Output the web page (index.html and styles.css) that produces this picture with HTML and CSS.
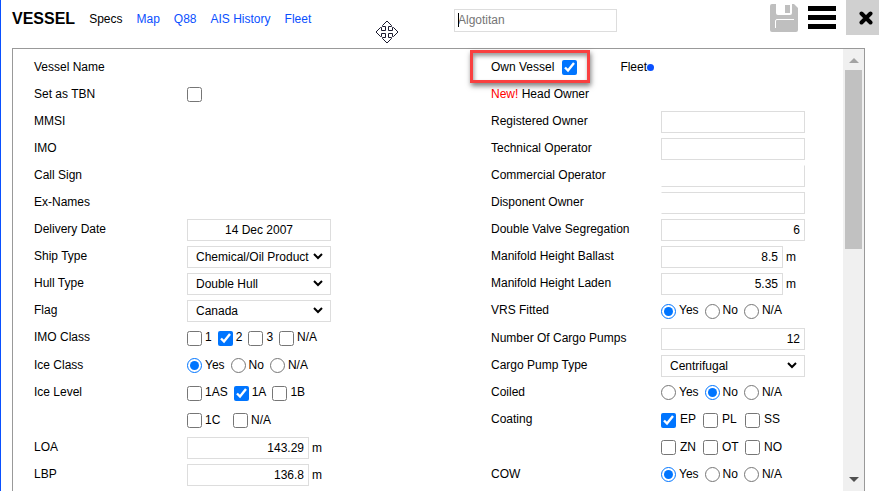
FILE: index.html
```html
<!DOCTYPE html>
<html lang="en">
<head>
    <meta charset="UTF-8">
    <meta name="viewport" content="width=device-width, initial-scale=1.0">
    <title>Vessel</title>
    <link rel="stylesheet" href="styles.css">
</head>
<body>
    <div class="window">
        <header class="header">
            <nav class="tabs">
                <h1>VESSEL</h1>
                <a href="#specs" class="active">Specs</a>
                <a href="#map">Map</a>
                <a href="#q88">Q88</a>
                <a href="#ais">AIS History</a>
                <a href="#fleet">Fleet</a>
            </nav>
            <div class="search">
                <input type="text" placeholder="Algotitan" aria-label="Vessel">
            </div>
            <div class="tools">
                <button type="button" class="save" aria-label="Save">
                    <svg width="28" height="28" viewBox="0 0 28 28">
                        <path fill="#bfbfbf" d="M2 0H6V9Q6 11 8 11H20Q22 11 22 9V0H24L28 4V26Q28 28 26 28H2Q0 28 0 26V2Q0 0 2 0Z"/>
                        <rect x="15" y="1" width="5" height="8" fill="#bfbfbf"/>
                        <path fill="none" stroke="#fff" d="M5.5 24V17Q5.5 15.5 7 15.5H24"/>
                    </svg>
                </button>
                <button type="button" class="menu" aria-label="Menu">
                    <svg width="28" height="23" viewBox="0 0 28 23">
                        <path stroke="#000" stroke-width="5" d="M0 2.5H28M0 11.5H28M0 20.5H28"/>
                    </svg>
                </button>
                <button type="button" class="close" aria-label="Close">
                    <svg width="14" height="14" viewBox="0 0 14 14">
                        <path stroke="#000" stroke-width="4" stroke-linecap="round" d="M2.5 2.5L11.5 11.5M11.5 2.5L2.5 11.5"/>
                    </svg>
                </button>
            </div>
            <svg class="move" width="24" height="24" viewBox="0 0 24 24">
                <path fill="#fff" stroke="#1a1a2e" d="M12 1L16.5 5.5V6.5H13.5V10.5H17.5V7.5H18.5L23 12L18.5 16.5H17.5V13.5H13.5V17.5H16.5V18.5L12 23L7.5 18.5V17.5H10.5V13.5H6.5V16.5H5.5L1 12L5.5 7.5H6.5V10.5H10.5V6.5H7.5V5.5Z"/>
            </svg>
        </header>

        <main class="panel">
            <form class="form">
                <div class="column left">
                    <div class="row"><span class="name">Vessel Name</span></div>
                    <div class="row">
                        <label class="name" for="tbn">Set as TBN</label>
                        <div class="choices"><input type="checkbox" id="tbn"></div>
                    </div>
                    <div class="row"><span class="name">MMSI</span></div>
                    <div class="row"><span class="name">IMO</span></div>
                    <div class="row"><span class="name">Call Sign</span></div>
                    <div class="row"><span class="name">Ex-Names</span></div>
                    <div class="row">
                        <label class="name" for="delivery">Delivery Date</label>
                        <input type="text" class="box date" id="delivery" value="14 Dec 2007">
                    </div>
                    <div class="row">
                        <label class="name" for="shipType">Ship Type</label>
                        <select class="box" id="shipType"><option>Chemical/Oil Product</option></select>
                    </div>
                    <div class="row">
                        <label class="name" for="hullType">Hull Type</label>
                        <select class="box" id="hullType"><option>Double Hull</option></select>
                    </div>
                    <div class="row">
                        <label class="name" for="flag">Flag</label>
                        <select class="box" id="flag"><option>Canada</option></select>
                    </div>
                    <div class="row tall">
                        <span class="name">IMO Class</span>
                        <div class="choices">
                            <label><input type="checkbox"><span>1</span></label>
                            <label><input type="checkbox" checked><span>2</span></label>
                            <label><input type="checkbox"><span>3</span></label>
                            <label><input type="checkbox"><span>N/A</span></label>
                        </div>
                    </div>
                    <div class="row">
                        <span class="name">Ice Class</span>
                        <div class="choices">
                            <label><input type="radio" name="iceClass" checked><span>Yes</span></label>
                            <label><input type="radio" name="iceClass"><span>No</span></label>
                            <label><input type="radio" name="iceClass"><span>N/A</span></label>
                        </div>
                    </div>
                    <div class="row tall">
                        <span class="name">Ice Level</span>
                        <div class="choices ice">
                            <label><input type="checkbox"><span>1AS</span></label>
                            <label><input type="checkbox" checked><span>1A</span></label>
                            <label><input type="checkbox"><span>1B</span></label>
                        </div>
                    </div>
                    <div class="row">
                        <span class="name"></span>
                        <div class="choices ice">
                            <label><input type="checkbox"><span>1C</span></label>
                            <label><input type="checkbox"><span>N/A</span></label>
                        </div>
                    </div>
                    <div class="row">
                        <label class="name" for="loa">LOA</label>
                        <input type="text" class="box number short" id="loa" value="143.29"><span class="unit">m</span>
                    </div>
                    <div class="row">
                        <label class="name" for="lbp">LBP</label>
                        <input type="text" class="box number short" id="lbp" value="136.8"><span class="unit">m</span>
                    </div>
                </div>

                <div class="column right">
                    <div class="row own">
                        <div class="highlight"></div>
                        <label class="own-label" for="own">Own Vessel</label>
                        <input type="checkbox" id="own" checked>
                        <span class="fleet">Fleet</span><i class="dot"></i>
                    </div>
                    <div class="row"><span class="name"><b class="new">New!</b> Head Owner</span></div>
                    <div class="row">
                        <label class="name" for="registered">Registered Owner</label>
                        <input type="text" class="box" id="registered">
                    </div>
                    <div class="row">
                        <label class="name" for="technical">Technical Operator</label>
                        <input type="text" class="box" id="technical">
                    </div>
                    <div class="row">
                        <label class="name" for="commercial">Commercial Operator</label>
                        <input type="text" class="box open-top open-left" id="commercial">
                    </div>
                    <div class="row">
                        <label class="name" for="disponent">Disponent Owner</label>
                        <input type="text" class="box open-left" id="disponent">
                    </div>
                    <div class="row">
                        <label class="name" for="valve">Double Valve Segregation</label>
                        <input type="text" class="box number" id="valve" value="6">
                    </div>
                    <div class="row">
                        <label class="name" for="ballast">Manifold Height Ballast</label>
                        <input type="text" class="box number short" id="ballast" value="8.5"><span class="unit">m</span>
                    </div>
                    <div class="row">
                        <label class="name" for="laden">Manifold Height Laden</label>
                        <input type="text" class="box number short" id="laden" value="5.35"><span class="unit">m</span>
                    </div>
                    <div class="row tall">
                        <span class="name">VRS Fitted</span>
                        <div class="choices">
                            <label><input type="radio" name="vrs" checked><span>Yes</span></label>
                            <label><input type="radio" name="vrs"><span>No</span></label>
                            <label><input type="radio" name="vrs"><span>N/A</span></label>
                        </div>
                    </div>
                    <div class="row">
                        <label class="name" for="pumps">Number Of Cargo Pumps</label>
                        <input type="text" class="box number" id="pumps" value="12">
                    </div>
                    <div class="row">
                        <label class="name" for="pumpType">Cargo Pump Type</label>
                        <select class="box" id="pumpType"><option>Centrifugal</option></select>
                    </div>
                    <div class="row">
                        <span class="name">Coiled</span>
                        <div class="choices">
                            <label><input type="radio" name="coiled"><span>Yes</span></label>
                            <label><input type="radio" name="coiled" checked><span>No</span></label>
                            <label><input type="radio" name="coiled"><span>N/A</span></label>
                        </div>
                    </div>
                    <div class="row tall">
                        <span class="name">Coating</span>
                        <div class="choices coating">
                            <label><input type="checkbox" checked><span>EP</span></label>
                            <label><input type="checkbox"><span>PL</span></label>
                            <label><input type="checkbox"><span>SS</span></label>
                        </div>
                    </div>
                    <div class="row">
                        <span class="name"></span>
                        <div class="choices coating">
                            <label><input type="checkbox"><span>ZN</span></label>
                            <label><input type="checkbox"><span>OT</span></label>
                            <label><input type="checkbox"><span>NO</span></label>
                        </div>
                    </div>
                    <div class="row">
                        <span class="name">COW</span>
                        <div class="choices">
                            <label><input type="radio" name="cow" checked><span>Yes</span></label>
                            <label><input type="radio" name="cow"><span>No</span></label>
                            <label><input type="radio" name="cow"><span>N/A</span></label>
                        </div>
                    </div>
                </div>
            </form>
            <div class="scrollbar">
                <i class="arrow up"></i>
                <div class="track"><div class="thumb"></div></div>
                <i class="arrow down"></i>
            </div>
        </main>
    </div>
</body>
</html>
```
FILE: styles.css
```css
* {
    box-sizing: border-box;
}

body {
    margin: 0;
    background: #fff;
    color: #000;
    font: 12px/16px "Liberation Sans", Arial, sans-serif;
}

input, select, button {
    font: inherit;
    color: inherit;
    margin: 0;
}

.window {
    display: flex;
    flex-direction: column;
    min-height: 100vh;
    border-left: 1px solid #0a50ff;
}

/* header */
.header {
    position: relative;
    display: grid;
    grid-template-columns: 442fr 163px 262fr;
    height: 48px;
    padding-left: 11px;
}

.tabs {
    display: flex;
    align-items: center;
    gap: 14px;
    height: 37px;
}

.tabs h1 {
    margin: 0;
    font-size: 16px;
}

.tabs a {
    color: #0a50ff;
    text-decoration: none;
    white-space: nowrap;
}

.tabs .active {
    color: #000;
}

.search {
    position: relative;
    padding-top: 9px;
}

.search input {
    display: block;
    width: 100%;
    height: 23px;
    padding: 0 3px 2px;
    border: 1px solid #ddd;
    outline: none;
}

.search input::placeholder {
    color: #757575;
}

.search::after {
    content: "";
    position: absolute;
    left: 4px;
    top: 13px;
    width: 1px;
    height: 14px;
    background: #000;
}

.tools {
    display: flex;
    justify-content: flex-end;
    align-items: flex-start;
    gap: 10px;
}

.tools button {
    display: flex;
    align-items: center;
    justify-content: center;
    height: 35px;
    padding: 0;
    border: 0;
    background: none;
}

.tools .close {
    width: 33px;
    padding-left: 6px;
    background: #d0d0d0;
}

.move {
    position: absolute;
    left: 374px;
    top: 20px;
}

/* panel */
.panel {
    display: flex;
    flex: 1;
    margin: 0 14px 0 11px;
    border: 1px solid #999;
    border-bottom: 0;
}

.form {
    display: grid;
    grid-template-columns: 457fr 352fr;
    align-content: start;
    flex: 1;
    padding: 5px 0 0 21px;
}

.row {
    display: flex;
    align-items: center;
    height: 27px;
}

.row.tall {
    height: 28px;
}

.name {
    width: 153px;
    flex: none;
    padding-bottom: 2px;
}

.right .name {
    width: 170px;
}

.new {
    color: #f00;
    font-weight: normal;
}

.box {
    width: 144px;
    height: 22px;
    padding: 0 4px;
    border: 1px solid #ddd;
    border-radius: 0;
    background: #fff;
}

select.box {
    appearance: none;
    padding: 0 8px;
    background: #fff url("data:image/svg+xml,%3Csvg xmlns='http://www.w3.org/2000/svg' width='10' height='7'%3E%3Cpath fill='none' stroke='%23000' stroke-width='2' d='M1 1L5 5L9 1'/%3E%3C/svg%3E") no-repeat right 7px center;
}

.box.short {
    width: 122px;
}

.date {
    text-align: center;
}

.number {
    text-align: right;
}

.open-top {
    border-top-color: transparent;
}

.open-left {
    border-left-color: transparent;
}

.unit {
    margin-left: 3px;
}

input[type="checkbox"], input[type="radio"] {
    width: 15px;
    height: 15px;
    flex: none;
    accent-color: #0075ff;
}

.choices {
    display: flex;
    align-items: center;
    gap: 6px;
}

.choices label {
    display: flex;
    align-items: center;
    gap: 3px;
}

.choices span {
    padding-bottom: 2px;
}

.ice label:first-child {
    min-width: 40px;
}

.coating {
    display: grid;
    grid-template-columns: repeat(3, 42px);
    gap: 0;
}

.coating label {
    gap: 4px;
}

/* own vessel */
.own {
    position: relative;
}

.own-label {
    padding-bottom: 2px;
    margin-right: 8px;
}

.fleet {
    margin-left: 43px;
    padding-bottom: 2px;
}

.dot {
    width: 7px;
    height: 7px;
    border-radius: 50%;
    background: #0a50ff;
}

.highlight {
    position: absolute;
    left: -21px;
    top: -4px;
    width: 120px;
    height: 33px;
    border: 3px solid #f94040;
    box-shadow: 1px 3px 5px rgba(0, 0, 0, 0.5), inset 1px 3px 4px rgba(0, 0, 0, 0.4);
    pointer-events: none;
}

/* scrollbar */
.scrollbar {
    display: flex;
    flex-direction: column;
    align-items: center;
    width: 21px;
    background: #f0f0f0;
}

.track {
    flex: 1;
    width: 17px;
}

.thumb {
    height: 45%;
    background: #c1c1c1;
}

.arrow {
    margin: 9px 0 7px;
    border: 5px solid transparent;
}

.arrow.up {
    border-top: 0;
    border-bottom-color: #a3a3a3;
}

.arrow.down {
    margin-bottom: 9px;
    border-bottom: 0;
    border-top-color: #505050;
}
```
